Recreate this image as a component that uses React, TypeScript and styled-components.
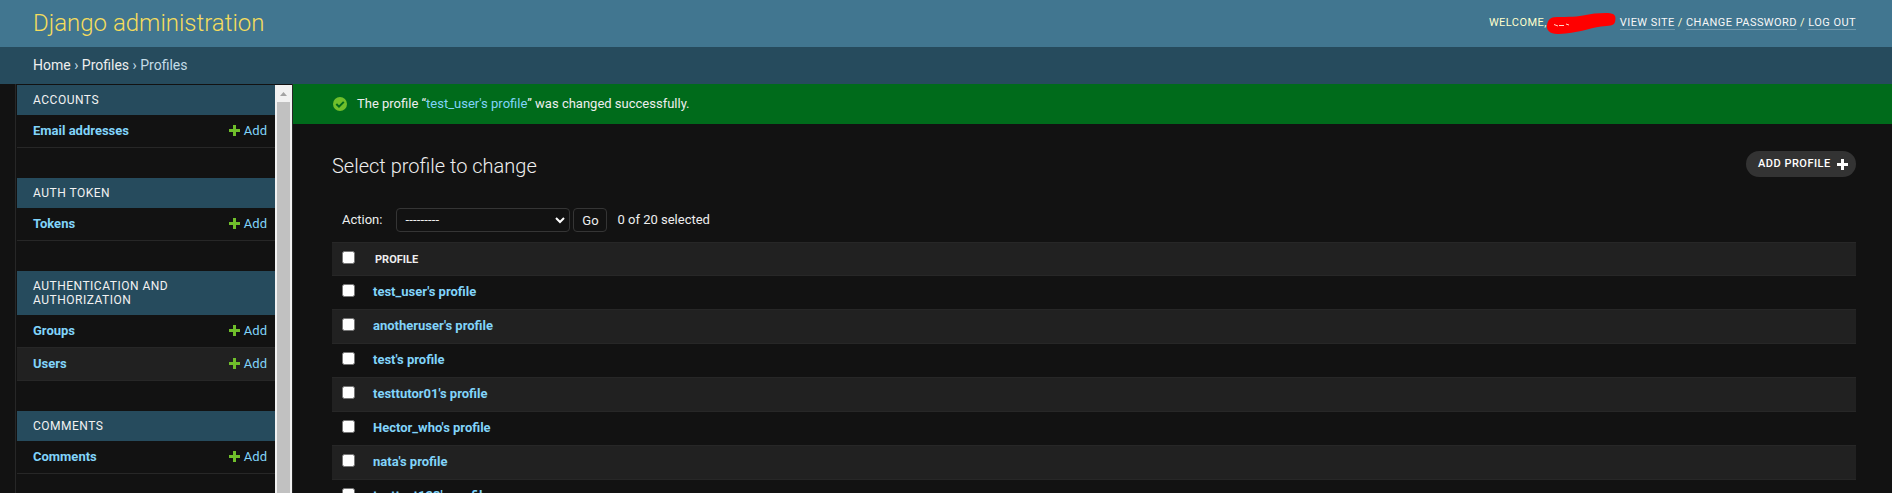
import React from 'react';
import styled, { createGlobalStyle } from 'styled-components';

const GlobalStyle = createGlobalStyle`
  * { box-sizing: border-box; }
  html, body { height: 100%; overflow: hidden; }
  body {
    margin: 0;
    background: #121212;
    color: #eeeeee;
    font: 13px/17px Roboto, sans-serif;
  }
  a { color: #81d4fa; text-decoration: none; }
`;

const Page = styled.div`
  display: flex;
  flex-direction: column;
  height: 493px;
  overflow: hidden;
`;

const Header = styled.header`
  flex: none;
  display: flex;
  justify-content: space-between;
  height: 47px;
  padding: 0 36px 0 33px;
  background: #417690;
  color: #ffffcc;
`;

const SiteName = styled.h1`
  margin: 0;
  padding-top: 8px;
  font-size: 24px;
  line-height: 30px;
  font-weight: 300;
  color: #f5dd5d;
`;

const UserTools = styled.div`
  position: relative;
  display: flex;
  padding-top: 15px;
  font-size: 11px;
  line-height: 15px;
  letter-spacing: 0.44px;
  text-transform: uppercase;
  white-space: pre;
  a {
    height: 15px;
    color: #f7f7f7;
    border-bottom: 1px solid rgba(255, 255, 255, 0.25);
  }
`;

const NameGap = styled.span`
  width: 73px;
`;

const Scribble = styled.svg`
  position: absolute;
  left: 56px;
  top: 10px;
`;

const Breadcrumbs = styled.nav`
  flex: none;
  height: 37px;
  padding: 10px 33px;
  background: #264b5d;
  color: #c4dce8;
  font-size: 14px;
  line-height: 16px;
  a { color: #eeeeee; }
`;

const Main = styled.div`
  flex: 1;
  display: flex;
  min-height: 0;
`;

const Toggle = styled.div`
  flex: none;
  width: 16px;
  border-right: 1px solid #272727;
`;

const Sidebar = styled.nav`
  flex: none;
  display: flex;
  width: 277px;
  padding: 1px 0 0 1px;
  border-right: 1px solid #272727;
`;

const AppList = styled.div`
  flex: 1;
  display: flex;
  flex-direction: column;
  gap: 30px;
`;

const Caption = styled.h2`
  margin: 0;
  padding: 8px 60px 8px 16px;
  background: #264b5d;
  color: #f2f2f2;
  font-size: 12px;
  line-height: 14px;
  font-weight: 400;
  letter-spacing: 0.5px;
  text-transform: uppercase;
`;

const ModelRow = styled.div<{ $alt?: boolean }>`
  display: flex;
  justify-content: space-between;
  height: 33px;
  padding: 7px 8px 0 16px;
  background: ${(p) => (p.$alt ? '#212121' : 'transparent')};
  border-bottom: 1px solid #272727;
  a:first-child { font-weight: 700; }
`;

const AddLink = styled.a`
  display: flex;
  gap: 4px;
  svg { margin-top: 3px; }
`;

const Scrollbar = styled.div`
  flex: none;
  display: flex;
  flex-direction: column;
  align-items: center;
  width: 17px;
  background: #f1f1f1;
  svg { flex: none; }
`;

const Thumb = styled.div`
  flex: 1;
  width: 13px;
  background: #c1c1c1;
`;

const Content = styled.main`
  flex: 1;
  min-width: 0;
`;

const Message = styled.div`
  display: flex;
  height: 40px;
  padding: 11px 40px;
  gap: 10px;
  background: #006b1b;
  svg { margin-top: 2px; }
`;

const TitleBar = styled.div`
  display: flex;
  justify-content: space-between;
  padding: 27px 36px 0 39px;
  height: 84px;
`;

const Title = styled.h1`
  margin: 0;
  padding-top: 3px;
  font-size: 20px;
  line-height: 24px;
  font-weight: 300;
`;

const AddButton = styled.a`
  display: flex;
  width: 110px;
  height: 26px;
  padding: 5px 8px 0 12px;
  justify-content: space-between;
  border-radius: 13px;
  background: #333333;
  font-size: 11px;
  line-height: 15px;
  font-weight: 500;
  letter-spacing: 0.5px;
  text-transform: uppercase;
  && { color: #ffffff; }
  svg { margin-top: 3px; }
`;

const Actions = styled.div`
  display: flex;
  height: 34px;
  padding-left: 49px;
  line-height: 24px;
`;

const ActionSelect = styled.div`
  display: flex;
  justify-content: space-between;
  width: 174px;
  height: 24px;
  margin-left: 14px;
  padding: 0 4px 0 8px;
  border: 1px solid #353535;
  border-radius: 4px;
  line-height: 22px;
  letter-spacing: 0.15px;
  svg { margin-top: 8px; }
`;

const GoButton = styled.button`
  width: 34px;
  height: 24px;
  margin: 0 10px 0 3px;
  padding: 2px 0 0;
  border: 1px solid #353535;
  border-radius: 4px;
  background: #121212;
  color: #eeeeee;
  font: 13px/20px Roboto, sans-serif;
`;

const Results = styled.div`
  margin: 0 36px 0 39px;
`;

const ResultHead = styled.div`
  display: flex;
  gap: 20px;
  height: 33px;
  padding: 8px 10px 0;
  background: #212121;
  border-top: 1px solid #272727;
  font-size: 11px;
  line-height: 18px;
  font-weight: 700;
  text-transform: uppercase;
`;

const ResultRow = styled.div<{ $alt?: boolean }>`
  display: flex;
  gap: 18px;
  height: 34px;
  padding: 7px 10px 0;
  background: ${(p) => (p.$alt ? '#212121' : 'transparent')};
  border-top: 1px solid #272727;
  font-weight: 700;
  & > span { margin-top: 1px; }
`;

const Checkbox = styled.span`
  flex: none;
  width: 13px;
  height: 13px;
  border: 1px solid #767676;
  border-radius: 2.5px;
  background: #ffffff;
`;

const Plus = ({ color }: { color: string }) => (
  <svg width="11" height="11" viewBox="0 0 11 11">
    <path d="M4 0h3v4h4v3H7v4H4V7H0V4h4z" fill={color} />
  </svg>
);

const apps = [
  { name: 'Accounts', models: ['Email addresses'] },
  { name: 'Auth Token', models: ['Tokens'] },
  { name: 'Authentication and Authorization', models: ['Groups', 'Users'] },
  { name: 'Comments', models: ['Comments'] },
];

const profiles = ['test_user', 'anotheruser', 'test', 'testtutor01', 'Hector_who', 'nata', 'testtest123'];

export default function App() {
  return (
    <Page>
      <GlobalStyle />
      <Header>
        <SiteName>Django administration</SiteName>
        <UserTools>
          <span>Welcome,</span>
          <NameGap />
          <a>View site</a>
          <span> / </span>
          <a>Change password</a>
          <span> / </span>
          <a>Log out</a>
          <Scribble width="76" height="28" viewBox="0 0 76 28">
            <path
              d="M9 7.2C18 6.5 30 7.5 38 5.5C47 3.5 58 2.7 65 3.2C71 3.8 71 8 70 12C69 16 64 15.5 56 16.5C44 18 32 23.5 14 24C5 24.5 1 20 2 15C3 10 5 8 9 7.2Z"
              fill="#ff0000"
            />
            <path d="M9 14.5l4 1.5M14 15.5h5M21 14l3 1" stroke="#ffd9c8" strokeWidth="1" fill="none" />
          </Scribble>
        </UserTools>
      </Header>
      <Breadcrumbs>
        <a>Home</a> › <a>Profiles</a> › Profiles
      </Breadcrumbs>
      <Main>
        <Toggle />
        <Sidebar>
          <AppList>
            {apps.map((app) => (
              <section key={app.name}>
                <Caption>{app.name}</Caption>
                {app.models.map((model, i) => (
                  <ModelRow key={model} $alt={i % 2 === 1}>
                    <a>{model}</a>
                    <AddLink>
                      <Plus color="#70bf2b" />
                      Add
                    </AddLink>
                  </ModelRow>
                ))}
              </section>
            ))}
          </AppList>
          <Scrollbar>
            <svg width="17" height="17" viewBox="0 0 17 17">
              <path d="M5 11L8.5 7L12 11Z" fill="#a3a3a3" />
            </svg>
            <Thumb />
          </Scrollbar>
        </Sidebar>
        <Content>
          <Message>
            <svg width="14" height="14" viewBox="0 0 14 14">
              <circle cx="7" cy="7" r="7" fill="#70bf2b" />
              <path d="M3.3 7L6 9.7L10.8 4.9" stroke="#006b1b" strokeWidth="2" fill="none" />
            </svg>
            <span>
              The profile “<a>test_user's profile</a>” was changed successfully.
            </span>
          </Message>
          <TitleBar>
            <Title>Select profile to change</Title>
            <AddButton>
              Add profile
              <Plus color="#ffffff" />
            </AddButton>
          </TitleBar>
          <Actions>
            <span>Action:</span>
            <ActionSelect>
              ---------
              <svg width="10" height="7" viewBox="0 0 10 7">
                <path d="M1 1L5 5L9 1" stroke="#ffffff" strokeWidth="2" fill="none" />
              </svg>
            </ActionSelect>
            <GoButton>Go</GoButton>
            <span>0 of 20 selected</span>
          </Actions>
          <Results>
            <ResultHead>
              <Checkbox />
              Profile
            </ResultHead>
            {profiles.map((name, i) => (
              <ResultRow key={name} $alt={i % 2 === 1}>
                <Checkbox />
                <a>{name}'s profile</a>
              </ResultRow>
            ))}
          </Results>
        </Content>
      </Main>
    </Page>
  );
}
